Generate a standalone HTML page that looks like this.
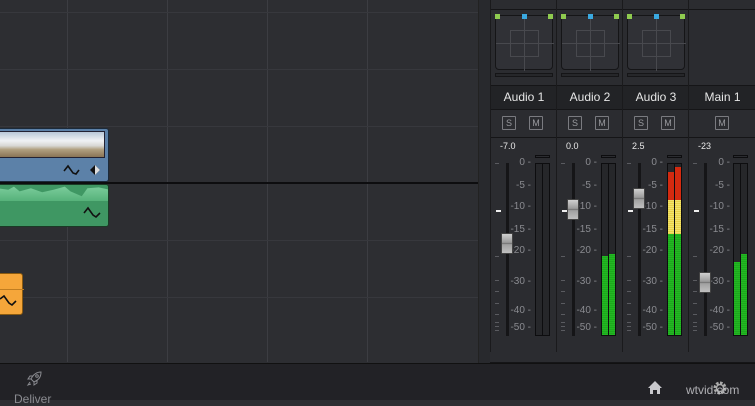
<!DOCTYPE html>
<html><head><meta charset="utf-8"><style>
*{margin:0;padding:0;box-sizing:border-box}
body{width:755px;height:400px;overflow:hidden;background:#2d2e32;font-family:"Liberation Sans",sans-serif;position:relative}
.a{position:absolute}
.vl{position:absolute;top:0;height:362px;width:1px;background:#3c3d42}
.hl{position:absolute;left:0;width:478px;height:1px;background:#37383d}
.col{position:absolute;top:0;height:363px;width:66px;border-left:1px solid #1a1a1c}
.pan{position:absolute;left:4px;top:15px;width:58px;height:55px;border:1px solid #151517;border-radius:0 0 4px 4px;background:#303136}
.pan i{position:absolute;background:#48494e}
.dot{position:absolute;width:5px;height:5px}
.bar{position:absolute;left:4px;top:73px;width:58px;height:4px;border:1px solid #151517;background:#26272a}
.name{position:absolute;left:0;top:86px;width:66px;height:23px;background:#222326;color:#e6e6e6;font-size:12px;text-align:center;line-height:23px}
.btn{position:absolute;top:116px;width:14px;height:14px;border:1px solid #7a7b80;color:#9a9b9f;font-size:9px;text-align:center;line-height:12px;border-radius:1px}
.val{position:absolute;left:9px;top:141px;color:#e8e8e8;font-size:9px}
.trk{position:absolute;left:15px;top:163px;width:3px;height:173px;background:#151517}
.hd{position:absolute;left:10px;width:12px;height:21px;background:linear-gradient(#d0d0d0,#9a9a9a 45%,#6e6e6e 50%,#a0a0a0 55%,#c0c0c0);border:1px solid #444;border-radius:1px}
.lb{position:absolute;right:25px;color:#8a8b90;font-size:10px;text-align:right;width:30px}
.lt{position:absolute;left:4px;width:4px;height:1px;background:#5a5b60}
.mt{position:absolute;left:44px;top:163px;width:15px;height:173px;border:1px solid #0d0d0f;background:#26272a}
.mt:after{content:"";position:absolute;left:6px;top:0;width:1px;height:100%;background:#0d0d0f}
.cap{position:absolute;left:44px;top:155px;width:15px;height:3px;border:1px solid #0d0d0f}
.g{position:absolute;background:repeating-linear-gradient(#22b822 0 1px,#1ea81e 1px 2px)}
.mk{position:absolute;left:5px;top:210px;width:5px;height:2px;background:#eee}
</style></head><body>
<div class="vl" style="left:67px"></div><div class="vl" style="left:167px"></div><div class="vl" style="left:267px"></div><div class="vl" style="left:367px"></div>
<div class="hl" style="top:12px"></div><div class="hl" style="top:69px"></div><div class="hl" style="top:126px"></div><div class="hl" style="top:240px"></div><div class="hl" style="top:297px"></div>
<div class="a" style="left:0;top:182px;width:490px;height:2px;background:#0d0d0f"></div>
<!-- video clip -->
<div class="a" style="left:-4px;top:128px;width:113px;height:54px;background:#5c81a8;border:1px solid #1b2a3a;border-radius:3px;overflow:hidden">
<div class="a" style="left:0;top:2px;width:108px;height:27px;background:linear-gradient(#b8c8d8,#f0f2f4 35%,#d8d8d4 55%,#b0a080 70%,#8a7455);border:1px solid #223"></div>
<svg class="a" style="left:66px;top:33px" width="42" height="16"><path d="M1 9 L5 4 L10 11 L13 12 L16 8" stroke="#111" stroke-width="1.6" fill="none"/><path d="M27 8 L32 3 L37 8 L32 13Z" fill="#111"/><path d="M32 3 L37 8 L32 13Z" fill="#ddd"/></svg></div>
<!-- audio clip -->
<div class="a" style="left:-4px;top:184px;width:113px;height:43px;background:#3f9763;border:1px solid #1a3a25;border-radius:3px;overflow:hidden">
<div class="a" style="left:0;top:0;width:113px;height:16px;background:linear-gradient(#7fcf9f,#56b27a);clip-path:polygon(0 20%,10% 30%,15% 10%,20% 40%,30% 20%,40% 45%,50% 30%,60% 10%,65% 40%,75% 70%,80% 20%,90% 15%,100% 30%,100% 100%,0 100%)"></div>
<svg class="a" style="left:86px;top:21px" width="20" height="14"><path d="M1 7 L5 2 L10 9 L13 11 L17 7" stroke="#111" stroke-width="1.6" fill="none"/></svg></div>
<!-- orange clip -->
<div class="a" style="left:-4px;top:273px;width:27px;height:42px;background:#f5a63a;border:1px solid #8a5a10;border-radius:3px">
<div class="a" style="left:0;top:15px;width:27px;height:1px;background:#c07d20"></div>
<svg class="a" style="left:2px;top:20px" width="22" height="14"><path d="M1 5 L5 2 L10 9 L13 11 L17 7" stroke="#111" stroke-width="1.6" fill="none"/></svg></div>
<!-- divider -->
<div class="a" style="left:478px;top:0;width:12px;height:363px;background:#28292d;border-left:1px solid #222"></div>
<div class="a" style="left:490px;top:0;width:265px;height:363px;background:#2b2c30"></div>
<div class="a" style="left:490px;top:9px;width:265px;height:1px;background:#151517"></div>
<div class="a" style="left:490px;top:137px;width:265px;height:1px;background:#151517"></div>
<div class="a" style="left:490px;top:85px;width:265px;height:1px;background:#151517"></div>
<div class="a" style="left:490px;top:109px;width:265px;height:1px;background:#151517"></div>

<!-- Audio 1 -->
<div class="col" style="left:490px">
<div class="pan"><i style="left:14px;top:14px;width:29px;height:27px;background:none;border:1px solid #48494e"></i><i style="left:28px;top:0;width:1px;height:55px"></i><i style="left:0;top:27px;width:58px;height:1px"></i></div>
<div class="dot" style="left:4px;top:14px;background:#8fcb4f"></div><div class="dot" style="left:31px;top:14px;background:#3aa9e0"></div><div class="dot" style="left:57px;top:14px;background:#8fcb4f"></div>
<div class="bar"></div><div class="name">Audio 1</div>
<div class="btn" style="left:11px">S</div><div class="btn" style="left:38px">M</div>
<div class="val">-7.0</div><div class="trk"></div><div class="mk"></div>
<div class="lb" style="top:157px">0 -</div><div class="lb" style="top:180px">-5 -</div><div class="lb" style="top:201px">-10 -</div><div class="lb" style="top:224px">-15 -</div><div class="lb" style="top:245px">-20 -</div><div class="lb" style="top:276px">-30 -</div><div class="lb" style="top:305px">-40 -</div><div class="lb" style="top:322px">-50 -</div>
<div class="lt" style="top:163px"></div><div class="lt" style="top:256px"></div><div class="lt" style="top:280px"></div><div class="lt" style="top:291px"></div><div class="lt" style="top:303px"></div><div class="lt" style="top:314px"></div><div class="lt" style="top:322px"></div><div class="lt" style="top:326px"></div><div class="lt" style="top:330px"></div>
<div class="cap"></div><div class="mt"></div>
<div class="hd" style="top:233px"></div>
</div>
<!-- Audio 2 -->
<div class="col" style="left:556px">
<div class="pan"><i style="left:14px;top:14px;width:29px;height:27px;background:none;border:1px solid #48494e"></i><i style="left:28px;top:0;width:1px;height:55px"></i><i style="left:0;top:27px;width:58px;height:1px"></i></div>
<div class="dot" style="left:4px;top:14px;background:#8fcb4f"></div><div class="dot" style="left:31px;top:14px;background:#3aa9e0"></div><div class="dot" style="left:57px;top:14px;background:#8fcb4f"></div>
<div class="bar"></div><div class="name">Audio 2</div>
<div class="btn" style="left:11px">S</div><div class="btn" style="left:38px">M</div>
<div class="val">0.0</div><div class="trk"></div><div class="mk"></div>
<div class="lb" style="top:157px">0 -</div><div class="lb" style="top:180px">-5 -</div><div class="lb" style="top:201px">-10 -</div><div class="lb" style="top:224px">-15 -</div><div class="lb" style="top:245px">-20 -</div><div class="lb" style="top:276px">-30 -</div><div class="lb" style="top:305px">-40 -</div><div class="lb" style="top:322px">-50 -</div>
<div class="lt" style="top:163px"></div><div class="lt" style="top:256px"></div><div class="lt" style="top:280px"></div><div class="lt" style="top:291px"></div><div class="lt" style="top:303px"></div><div class="lt" style="top:314px"></div><div class="lt" style="top:322px"></div><div class="lt" style="top:326px"></div><div class="lt" style="top:330px"></div>
<div class="cap"></div><div class="mt"><div class="g" style="left:0;top:92px;width:6px;height:79px"></div><div class="g" style="left:7px;top:90px;width:6px;height:81px"></div></div>
<div class="hd" style="top:199px"></div>
</div>
<!-- Audio 3 -->
<div class="col" style="left:622px">
<div class="pan"><i style="left:14px;top:14px;width:29px;height:27px;background:none;border:1px solid #48494e"></i><i style="left:28px;top:0;width:1px;height:55px"></i><i style="left:0;top:27px;width:58px;height:1px"></i></div>
<div class="dot" style="left:4px;top:14px;background:#8fcb4f"></div><div class="dot" style="left:31px;top:14px;background:#3aa9e0"></div><div class="dot" style="left:57px;top:14px;background:#8fcb4f"></div>
<div class="bar"></div><div class="name">Audio 3</div>
<div class="btn" style="left:11px">S</div><div class="btn" style="left:38px">M</div>
<div class="val">2.5</div><div class="trk"></div><div class="mk"></div>
<div class="lb" style="top:157px">0 -</div><div class="lb" style="top:180px">-5 -</div><div class="lb" style="top:201px">-10 -</div><div class="lb" style="top:224px">-15 -</div><div class="lb" style="top:245px">-20 -</div><div class="lb" style="top:276px">-30 -</div><div class="lb" style="top:305px">-40 -</div><div class="lb" style="top:322px">-50 -</div>
<div class="lt" style="top:163px"></div><div class="lt" style="top:256px"></div><div class="lt" style="top:280px"></div><div class="lt" style="top:291px"></div><div class="lt" style="top:303px"></div><div class="lt" style="top:314px"></div><div class="lt" style="top:322px"></div><div class="lt" style="top:326px"></div><div class="lt" style="top:330px"></div>
<div class="cap"></div><div class="mt">
<div class="a" style="left:0;top:8px;width:6px;height:28px;background:#d42a10"></div><div class="a" style="left:7px;top:3px;width:6px;height:33px;background:#d42a10"></div>
<div class="a" style="left:0;top:36px;width:13px;height:34px;background:repeating-linear-gradient(#f2e36a 0 1px,#e8d24a 1px 2px)"></div>
<div class="g" style="left:0;top:70px;width:13px;height:101px"></div></div>
<div class="hd" style="top:188px"></div>
</div>
<!-- Main 1 -->
<div class="col" style="left:688px;width:67px">
<div class="name" style="width:67px">Main 1</div>
<div class="btn" style="left:26px">M</div>
<div class="val">-23</div><div class="trk"></div><div class="mk"></div>
<div class="lb" style="top:157px">0 -</div><div class="lb" style="top:180px">-5 -</div><div class="lb" style="top:201px">-10 -</div><div class="lb" style="top:224px">-15 -</div><div class="lb" style="top:245px">-20 -</div><div class="lb" style="top:276px">-30 -</div><div class="lb" style="top:305px">-40 -</div><div class="lb" style="top:322px">-50 -</div>
<div class="lt" style="top:163px"></div><div class="lt" style="top:256px"></div><div class="lt" style="top:280px"></div><div class="lt" style="top:291px"></div><div class="lt" style="top:303px"></div><div class="lt" style="top:314px"></div><div class="lt" style="top:322px"></div><div class="lt" style="top:326px"></div><div class="lt" style="top:330px"></div>
<div class="cap"></div><div class="mt"><div class="g" style="left:0;top:98px;width:6px;height:73px"></div><div class="g" style="left:7px;top:90px;width:6px;height:81px"></div></div>
<div class="hd" style="top:272px"></div>
</div>
<div class="a" style="left:490px;top:352px;width:265px;height:11px;background:#2b2c30;border-bottom:1px solid #151517"></div>
<!-- bottom bar -->
<div class="a" style="left:0;top:363px;width:755px;height:37px;background:#222226;border-top:1px solid #111"></div>
<svg class="a" style="left:26px;top:370px" width="18" height="18" viewBox="0 0 18 18"><path d="M15 2 C10 2 7 5 5 9 L8 12 C12 10 15 8 15 2Z M5 9 L2 9 L4 6 L7 6 M8 12 L8 15 L11 13 L11 10 M4 12 L2 15 L5 14" stroke="#8a8b90" stroke-width="1" fill="none"/><circle cx="11" cy="6" r="1.3" stroke="#8a8b90" fill="none"/></svg>
<div class="a" style="left:14px;top:392px;color:#8a8b90;font-size:12px">Deliver</div>
<svg class="a" style="left:647px;top:380px" width="16" height="15" viewBox="0 0 16 15"><path d="M8 1 L15 8 L13 8 L13 14 L10 14 L10 10 L6 10 L6 14 L3 14 L3 8 L1 8Z" fill="#c8c8cc"/></svg>
<svg class="a" style="left:711px;top:379px" width="18" height="18" viewBox="0 0 18 18"><circle cx="9" cy="9" r="5" stroke="#aaa" stroke-width="3" fill="none" stroke-dasharray="2.5 1.4"/><circle cx="9" cy="9" r="3.5" stroke="#aaa" stroke-width="1.5" fill="none"/></svg>
<div class="a" style="left:686px;top:383px;color:#c8c8cc;font-size:12px;opacity:.85">wtvid.com</div>
</body></html>
